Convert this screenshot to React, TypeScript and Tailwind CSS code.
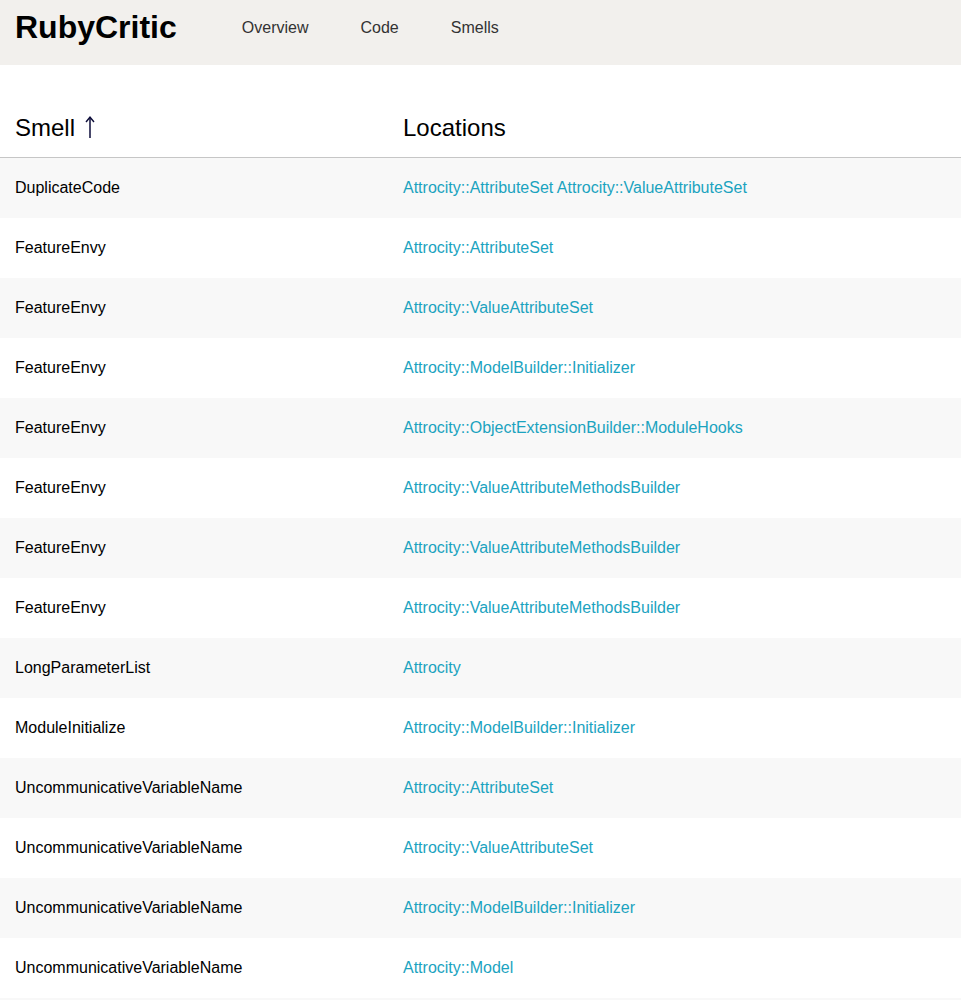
const rows: [string, string][] = [
  ["DuplicateCode", "Attrocity::AttributeSet Attrocity::ValueAttributeSet"],
  ["FeatureEnvy", "Attrocity::AttributeSet"],
  ["FeatureEnvy", "Attrocity::ValueAttributeSet"],
  ["FeatureEnvy", "Attrocity::ModelBuilder::Initializer"],
  ["FeatureEnvy", "Attrocity::ObjectExtensionBuilder::ModuleHooks"],
  ["FeatureEnvy", "Attrocity::ValueAttributeMethodsBuilder"],
  ["FeatureEnvy", "Attrocity::ValueAttributeMethodsBuilder"],
  ["FeatureEnvy", "Attrocity::ValueAttributeMethodsBuilder"],
  ["LongParameterList", "Attrocity"],
  ["ModuleInitialize", "Attrocity::ModelBuilder::Initializer"],
  ["UncommunicativeVariableName", "Attrocity::AttributeSet"],
  ["UncommunicativeVariableName", "Attrocity::ValueAttributeSet"],
  ["UncommunicativeVariableName", "Attrocity::ModelBuilder::Initializer"],
  ["UncommunicativeVariableName", "Attrocity::Model"],
];

function SortArrow() {
  return (
    <svg width="10" height="22" viewBox="0 0 10 22" className="ml-[10px] inline-block align-[-2px]">
      <path d="M5 1.5V22" stroke="#0d0d3a" strokeWidth="1.5" fill="none" />
      <path d="M1 6L5 1.2L9 6" stroke="#0d0d3a" strokeWidth="1.4" fill="none" />
    </svg>
  );
}

export default function App() {
  return (
    <div className="min-h-screen bg-white font-['Liberation_Sans',Arial,sans-serif] text-black">
      {/* top bar */}
      <header className="flex h-[65px] items-start bg-[#f2f0ed] pl-[15px]">
        <h1 className="mt-[3px] text-[32px] font-bold leading-[48px]">RubyCritic</h1>
        <nav className="ml-[39px] mt-[16px] flex text-[16px] leading-[24px] text-[#333]">
          <a className="px-[26px]">Overview</a>
          <a className="px-[26px]">Code</a>
          <a className="px-[26px]">Smells</a>
        </nav>
      </header>

      <table className="w-full table-fixed border-collapse">
        <colgroup>
          <col className="w-[403px]" />
          <col />
        </colgroup>
        <thead>
          <tr className="border-b border-[#c6c6c6]">
            <th className="pb-[15px] pl-[15px] pt-[48px] text-left text-[24px] font-normal leading-[29px]">
              Smell
              <SortArrow />
            </th>
            <th className="pb-[15px] pt-[48px] text-left text-[24px] font-normal leading-[29px]">Locations</th>
          </tr>
        </thead>
        <tbody>
          {rows.map(([smell, loc], i) => (
            <tr key={i} className={i % 2 === 0 ? "bg-[#f8f8f8]" : "bg-white"}>
              <td className="h-[60px] pl-[15px] text-[16px] leading-[20px]">{smell}</td>
              <td className="h-[60px] text-[16px] leading-[20px] text-[#1ba3bf]">{loc}</td>
            </tr>
          ))}
          <tr className="bg-[#f8f8f8]">
            <td className="h-[60px]" />
            <td className="h-[60px]" />
          </tr>
        </tbody>
      </table>
    </div>
  );
}
